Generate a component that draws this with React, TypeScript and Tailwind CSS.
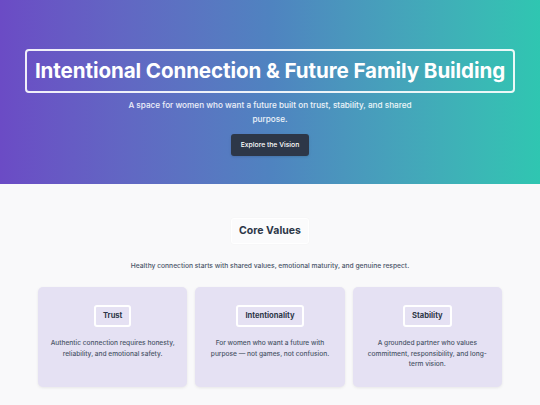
import React from 'react'

const VALUES = [
  {
    title: 'Trust',
    desc: 'Authentic connection requires honesty, reliability, and emotional safety.',
  },
  {
    title: 'Intentionality',
    desc: 'For women who want a future with purpose — not games, not confusion.',
  },
  {
    title: 'Stability',
    desc: 'A grounded partner who values commitment, responsibility, and long-term vision.',
  },
]

export default function App() {
  return (
    <div className="min-h-[405px] bg-[#f9f9fa] font-['Inter',sans-serif] overflow-hidden">
      {/* Hero */}
      <section className="h-[184px] bg-gradient-to-r from-[#6b4bc5] via-[#4f83c0] to-[#2fc6b1] flex flex-col items-center pt-[49px]">
        <h1 className="border-2 border-white/90 rounded-[4px] px-[8px] h-[44px] flex items-center text-white text-[20.6px] font-bold tracking-[-0.1px] leading-none">
          Intentional Connection &amp; Future Family Building
        </h1>
        <p className="mt-[5px] w-[300px] text-center text-[8.2px] leading-[14px] text-white/90 font-medium">
          A space for women who want a future built on trust, stability, and shared purpose.
        </p>
        <button className="mt-[8px] h-[22px] w-[78px] rounded-[3px] bg-[#2d3748] text-white text-[6.8px] font-medium shadow-sm">
          Explore the Vision
        </button>
      </section>

      {/* Core values */}
      <section className="flex flex-col items-center pt-[34px]">
        <h2 className="border border-white bg-white/40 rounded-[3px] w-[78px] h-[26px] flex items-center justify-center text-[10.5px] font-bold text-[#2d3748] shadow-[0_0_2px_rgba(0,0,0,0.04)]">
          Core Values
        </h2>
        <p className="mt-[17px] text-[6.7px] text-[#4a5568] font-medium">
          Healthy connection starts with shared values, emotional maturity, and genuine respect.
        </p>

        <div className="mt-[16px] grid grid-cols-3 gap-[8px] w-[464px]">
          {VALUES.map((v) => (
            <div
              key={v.title}
              className="h-[100px] rounded-[5px] bg-[#e5e1f3] shadow-[0_1px_3px_rgba(0,0,0,0.08)] flex flex-col items-center pt-[18px] px-[9px]"
            >
              <h3 className="h-[22px] px-[7px] border-2 border-white rounded-[3px] flex items-center text-[7.6px] font-bold text-[#2d3748]">
                {v.title}
              </h3>
              <p className="mt-[11px] text-center text-[6.6px] leading-[10.7px] text-[#4a5568] font-medium">
                {v.desc}
              </p>
            </div>
          ))}
        </div>
      </section>
    </div>
  )
}
